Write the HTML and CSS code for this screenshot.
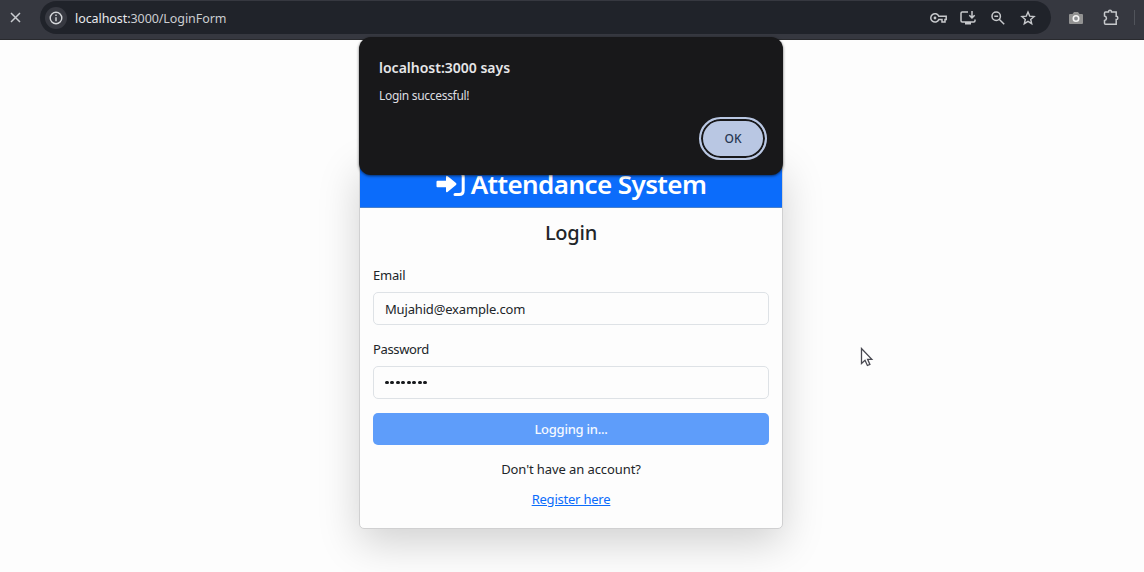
FILE: index.html
```html
<!DOCTYPE html>
<html lang="en">
<head>
<meta charset="utf-8">
<title>Login</title>
<link rel="stylesheet" href="styles.css">
</head>
<body>
<header class="toolbar">
  <svg class="stop" width="11" height="11" viewBox="0 0 11 11"><path d="M1 1l9 9M10 1l-9 9" stroke="#c9cbcf" stroke-width="1.5"/></svg>
  <div class="omnibox">
    <span class="site-info"><svg width="14" height="14" viewBox="0 0 14 14" fill="none" stroke="#d5d7da" stroke-width="1.4"><circle cx="7" cy="7" r="5.8"/><path d="M7 6.2v4M7 3.6v1.5"/></svg></span>
    <span class="url"><span class="host">localhost:</span>3000/LoginForm</span>
    <span class="actions">
      <svg width="18" height="16" viewBox="0 0 18 16" fill="none" stroke="#c7c9cc" stroke-width="1.5"><path d="M8.800 6.200h7.400v3.400h-1.200v2.300h-3V9.600H8.800A4.200 4.200 0 1 1 8.800 6.200z"/><circle cx="5" cy="8" r="1.400" fill="#c7c9cc" stroke="none"/></svg>
      <svg width="18" height="16" viewBox="0 0 18 16" fill="none" stroke="#c7c9cc" stroke-width="1.500"><path d="M8 2H2.200Q1 2 1 3.200v7.600Q1 12 2.200 12h11.600q1.200 0 1.200-1.200V9.500M12 1v6.500M9.300 5.200L12 7.900l2.700-2.700"/><path d="M5 12h6v2.500H5z" fill="#c7c9cc" stroke="none"/></svg>
      <svg width="16" height="16" viewBox="0 0 16 16" fill="none" stroke="#c7c9cc" stroke-width="1.500"><circle cx="6.200" cy="6.200" r="4.200"/><path d="M9.200 9.200l5 5M4.300 6.200h3.800"/></svg>
      <svg width="16" height="16" viewBox="0 0 16 16" fill="none" stroke="#c7c9cc" stroke-width="1.400"><path d="M8 2l1.700 4.100 4.400.4-3.400 2.900 1 4.300L8 11.400l-3.700 2.300 1-4.300L1.900 6.500l4.400-.4z"/></svg>
    </span>
  </div>
  <svg class="camera" width="16" height="14" viewBox="0 0 16 14"><path d="M2 3h2.500L6 1h4l1.500 2H14q1 0 1 1v8q0 1-1 1H2q-1 0-1-1V4q0-1 1-1z" fill="#929292"/><circle cx="8" cy="7.500" r="2.700" fill="#8b8d90" stroke="#f4f4f4" stroke-width="1.600"/></svg>
  <svg class="puzzle" width="18" height="18" viewBox="0 0 18 18" fill="none" stroke="#c7c9cc" stroke-width="1.500"><path d="M3.500 3H6.500C6.500.8 9.500.8 9.500 3H14.200v4.300c2.200 0 2.200 3.200 0 3.200v4.700H3.500q-1 0-1-1V11.500c2.600-.5 2.600-4 0-4.500v-3q0-1 1-1z"/></svg>
  <span class="divider"></span>
</header>
<main class="page">
  <section class="card">
    <h1 class="card-header">
      <svg width="30" height="26" viewBox="0 0 30 26"><path d="M1.500 9.800H10V6q0-2 1.500-1l8.500 7q1 1 0 2l-8.500 7q-1.500 1-1.500-1v-3.800H1.500Q.5 16.200.5 15.200v-4.400q0-1 1-1z" fill="#fff"/><path d="M20.500 1.500h2.700q4 0 4 4v14q0 4-4 4h-4.200" fill="none" stroke="#fff" stroke-width="3" stroke-linecap="round"/></svg>
      <span class="brand">Attendance System</span>
    </h1>
    <form class="card-body">
      <h2 class="title"><span>Login</span></h2>
      <label class="label email">Email</label>
      <div class="field address">Mujahid@example.com</div>
      <label class="label password">Password</label>
      <div class="field dots"><i></i><i></i><i></i><i></i><i></i><i></i><i></i><i></i></div>
      <div class="submit">Logging in...</div>
      <p class="question">Don't have an account?</p>
      <p class="register"><a>Register here</a></p>
    </form>
  </section>
</main>
<div class="dialog">
  <div class="dialog-title">localhost:3000 says</div>
  <div class="dialog-message">Login successful!</div>
  <div class="ok">OK</div>
</div>
<svg class="cursor" width="14" height="21" viewBox="0 0 14 21"><path d="M1.500 1.500v15l3.500-3.200 2.400 5.200 2.500-1.100-2.300-5.100h4.200z" fill="#fff" stroke="#484850" stroke-width="1.300"/></svg>
</body>
</html>
```
FILE: styles.css
```css
* { box-sizing: border-box; }
body {
  margin: 0;
  width: 1144px;
  height: 572px;
  overflow: hidden;
  background: #fdfdfd;
  color: #212529;
  font-family: "Noto Sans", "Open Sans", sans-serif;
  font-size: 13px;
}
svg { display: block; flex: none; }
.toolbar {
  height: 40px;
  padding: 1px 8px 5px 10px;
  display: flex;
  align-items: center;
  background: #363840;
  border-bottom: 1px solid #292a2e;
}
.omnibox {
  width: 1011px;
  height: 33px;
  margin-left: 19px;
  padding: 0 15px 0 5px;
  display: flex;
  align-items: center;
  border-radius: 17px;
  background: #20232a;
}
.site-info {
  width: 22px;
  height: 22px;
  display: grid;
  place-items: center;
  border-radius: 50%;
  background: #373941;
}
.url { margin: 1px 0 0 8px; color: #cbcdd1; font-size: 12.5px; white-space: nowrap; letter-spacing: -.07px; }
.host { color: #e8e9ec; }
.actions { margin-left: auto; display: flex; gap: 13px; }
.actions svg:nth-child(2) { margin-left: -1px; }
.actions svg:nth-child(3) { margin-left: -1px; }
.actions svg:nth-child(4) { margin-left: 1px; }
.camera { margin-left: 17px; }
.puzzle { margin-left: 18px; }
.divider { width: 1px; height: 15px; margin-left: 14px; background: #51545b; }
.page { height: 532px; padding: 119px 361px 43px 359px; }
.card {
  width: 424px;
  height: 370px;
  border: 1px solid #d0d0d1;
  border-radius: 5px;
  background: #fdfdfd;
  box-shadow: 0 14px 42px rgba(0, 0, 0, .175);
}
.card-header {
  height: 48px;
  margin: 0;
  padding: 1px 0 0;
  display: flex;
  align-items: center;
  justify-content: center;
  gap: 5px;
  background: #0b6cfb;
  border-bottom: 1px solid #4a80ca;
  color: #fff;
  font-size: 26px;
  font-weight: 600;
  line-height: 34px;
  letter-spacing: -.58px;
  white-space: nowrap;
}
.card-body { padding: 12px 13px 13px; display: flex; flex-direction: column; }
.title { margin: 0 0 18px; text-align: center; font-size: 20px; font-weight: 500; line-height: 26px; letter-spacing: -.2px; }
.label { line-height: 20px; margin: 1px 0 7px; align-self: flex-start; }
.password { letter-spacing: -.35px; }
.email { letter-spacing: -.2px; }
.field {
  height: 33px;
  padding: 0 11px;
  margin-bottom: 13px;
  display: flex;
  align-items: center;
  border: 1px solid #dee2e6;
  border-radius: 5px;
}
.address { letter-spacing: -.17px; padding-top: 1px; }
.dots { gap: 1.900px; margin-bottom: 14px; }
.dots i { width: 3.600px; height: 3.600px; border-radius: 50%; background: #17191c; }
.submit {
  height: 32px;
  border-radius: 5px;
  background: #5e9dfa;
  color: #f5f9ff;
  line-height: 32px;
  text-align: center;
  font-weight: 500;
  letter-spacing: -.25px;
}
.question, .register { margin: 14px 0 0; line-height: 20px; text-align: center; letter-spacing: -.09px; }
.register { margin-top: 10px; letter-spacing: -.22px; }
.register a { color: #0b6cfb; text-decoration: underline; }
.dialog {
  position: absolute;
  left: 359px;
  top: 37px;
  width: 424px;
  height: 138px;
  padding: 21px 16px 15px 20px;
  display: flex;
  flex-direction: column;
  border-radius: 12px;
  background: #18181a;
  box-shadow: 0 1px 3px rgba(0, 0, 0, .6);
}
.dialog-title { color: #e6e6e8; font-size: 14px; font-weight: 600; line-height: 20px; align-self: flex-start; }
.dialog-message { margin-top: 8px; color: #dedee0; font-size: 12px; line-height: 20px; letter-spacing: -.3px; align-self: flex-start; }
.ok {
  width: 68px;
  height: 43px;
  margin: auto 0 0 auto;
  border: 2px solid #b9c7e3;
  border-radius: 22px;
  background: #b9c7e3;
  box-shadow: inset 0 0 0 2px #18181a;
  color: #263652;
  font-size: 12px;
  font-weight: 500;
  line-height: 39px;
  text-align: center;
}
.cursor { position: absolute; left: 860px; top: 347px; }
```
